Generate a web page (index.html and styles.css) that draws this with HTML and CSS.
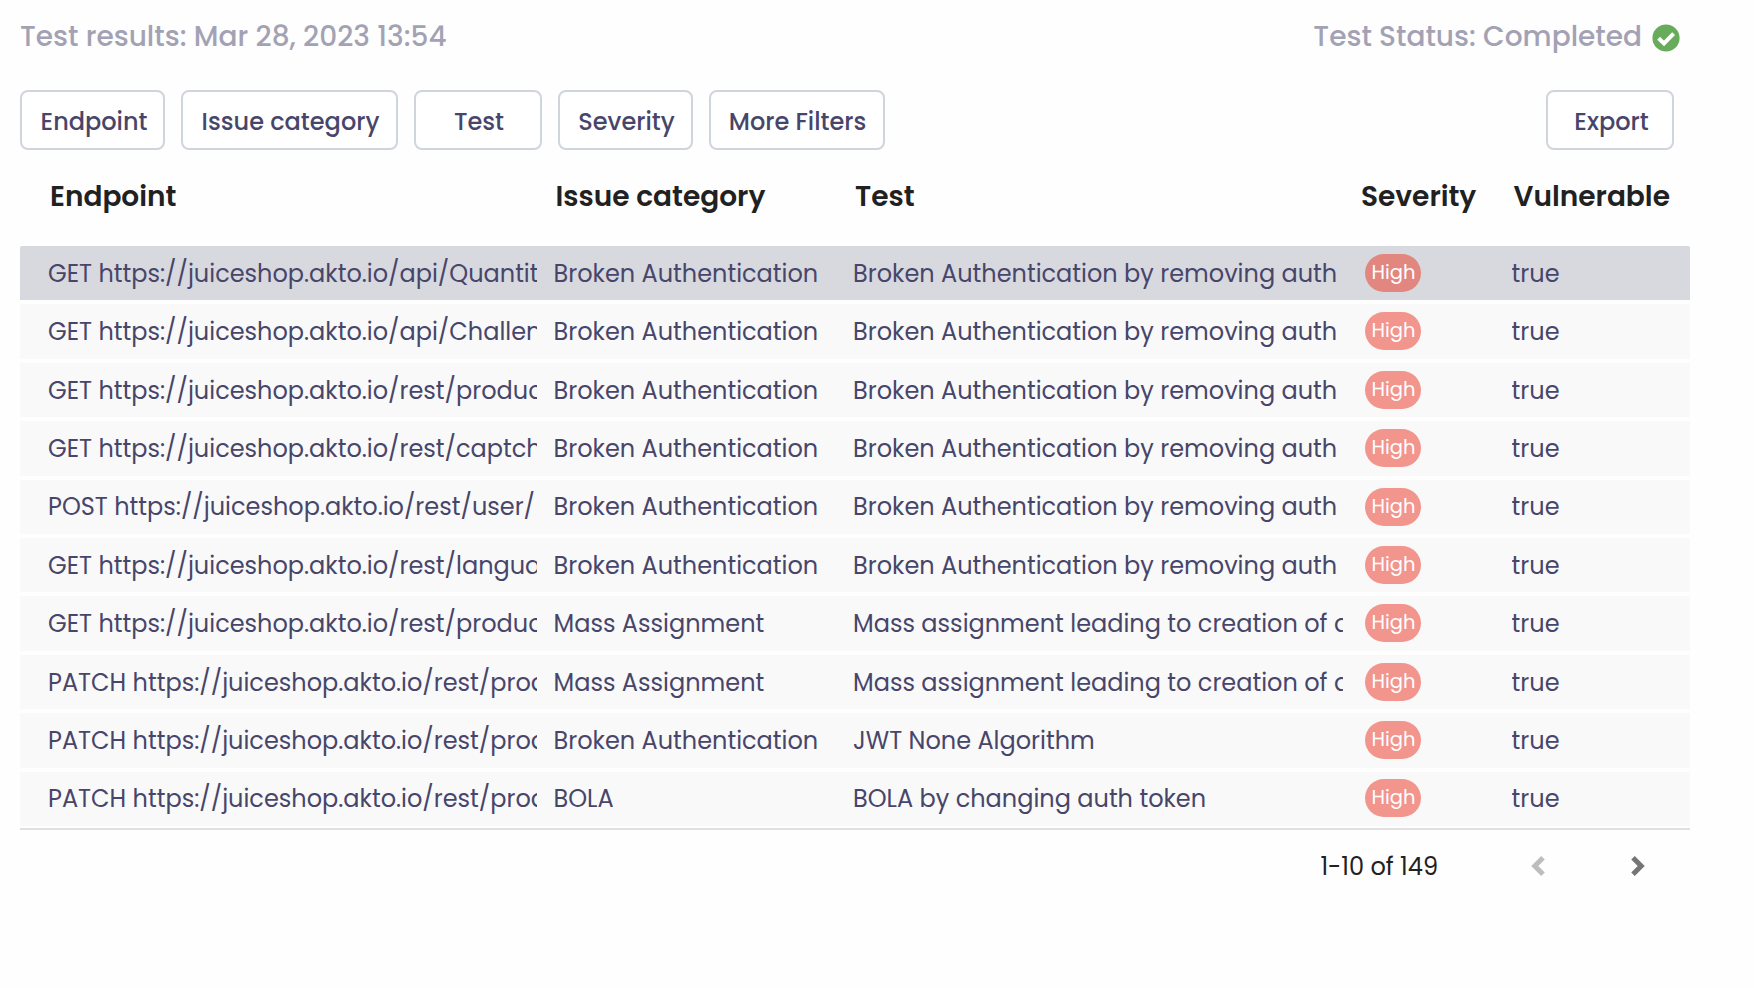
FILE: index.html
```
<!DOCTYPE html>
<html lang="en">
<head>
<meta charset="utf-8">
<title>Test results</title>
<link rel="stylesheet" href="styles.css">
</head>
<body>
<main class="page">
  <header class="summary">
    <span class="summary-results">Test results: Mar 28, 2023 13:54</span>
    <span class="summary-status">Test Status: Completed</span>
    <svg class="status-icon" viewBox="0 0 28 28"><circle cx="14" cy="14" r="13.6" fill="#68ac5b"/><path d="M6.600 14.300 12 19.400 21.600 9.600" fill="none" stroke="#fff" stroke-width="4"/></svg>
  </header>

  <nav class="toolbar">
    <button class="btn btn-endpoint">Endpoint</button>
    <button class="btn btn-category">Issue category</button>
    <button class="btn btn-test">Test</button>
    <button class="btn btn-severity">Severity</button>
    <button class="btn btn-more">More Filters</button>
    <button class="btn btn-export">Export</button>
  </nav>

  <section class="table">
    <div class="head grid">
      <span>Endpoint</span><span>Issue category</span><span>Test</span><span class="head-severity">Severity</span><span>Vulnerable</span>
    </div>
    <div class="rows">
      <div class="row grid active"><span class="cell">GET https://juiceshop.akto.io/api/Quantit</span><span class="cell">Broken Authentication</span><span class="cell">Broken Authentication by removing auth</span><span class="pill">High</span><span class="cell">true</span></div>
      <div class="row grid"><span class="cell">GET https://juiceshop.akto.io/api/Challen</span><span class="cell">Broken Authentication</span><span class="cell">Broken Authentication by removing auth</span><span class="pill">High</span><span class="cell">true</span></div>
      <div class="row grid"><span class="cell">GET https://juiceshop.akto.io/rest/produc</span><span class="cell">Broken Authentication</span><span class="cell">Broken Authentication by removing auth</span><span class="pill">High</span><span class="cell">true</span></div>
      <div class="row grid"><span class="cell">GET https://juiceshop.akto.io/rest/captch</span><span class="cell">Broken Authentication</span><span class="cell">Broken Authentication by removing auth</span><span class="pill">High</span><span class="cell">true</span></div>
      <div class="row grid"><span class="cell">POST https://juiceshop.akto.io/rest/user/</span><span class="cell">Broken Authentication</span><span class="cell">Broken Authentication by removing auth</span><span class="pill">High</span><span class="cell">true</span></div>
      <div class="row grid"><span class="cell">GET https://juiceshop.akto.io/rest/langua</span><span class="cell">Broken Authentication</span><span class="cell">Broken Authentication by removing auth</span><span class="pill">High</span><span class="cell">true</span></div>
      <div class="row grid"><span class="cell">GET https://juiceshop.akto.io/rest/produc</span><span class="cell">Mass Assignment</span><span class="cell">Mass assignment leading to creation of a</span><span class="pill">High</span><span class="cell">true</span></div>
      <div class="row grid"><span class="cell">PATCH https://juiceshop.akto.io/rest/prod</span><span class="cell">Mass Assignment</span><span class="cell">Mass assignment leading to creation of a</span><span class="pill">High</span><span class="cell">true</span></div>
      <div class="row grid"><span class="cell">PATCH https://juiceshop.akto.io/rest/prod</span><span class="cell">Broken Authentication</span><span class="cell">JWT None Algorithm</span><span class="pill">High</span><span class="cell">true</span></div>
      <div class="row grid"><span class="cell">PATCH https://juiceshop.akto.io/rest/prod</span><span class="cell">BOLA</span><span class="cell">BOLA by changing auth token</span><span class="pill">High</span><span class="cell">true</span></div>
    </div>
  </section>

  <footer class="pager">
    <span class="pager-range">1-10 of 149</span>
    <svg class="chevron" viewBox="0 0 14 20"><path d="M12 1.800 3.800 10l8.200 8.200" fill="none" stroke="#bdbdbd" stroke-width="5"/></svg>
    <svg class="chevron chevron-next" viewBox="0 0 14 20"><path d="M2 1.800 10.200 10 2 18.200" fill="none" stroke="#757575" stroke-width="5"/></svg>
  </footer>
</main>
</body>
</html>
```
FILE: styles.css
```
* { box-sizing: border-box; }

body {
  margin: 0;
  background: #fefefe;
  color: #47466a;
  font-family: Poppins, Inter, "Open Sans", sans-serif;
}

.page {
  width: 1690px;
  padding-left: 20px;
}

.summary {
  display: flex;
  align-items: center;
  height: 90px;
  padding: 0 10px 16px 0;
  color: #a3a2b4;
  font-size: 28px;
  font-weight: 500;
  line-height: 40px;
}
.summary-status { margin-left: auto; }
.status-icon { width: 28px; height: 28px; margin: 1px 0 0 10px; }

.toolbar {
  display: flex;
  gap: 16px;
  height: 60px;
  padding-right: 16px;
}
.btn {
  height: 60px;
  padding: 2px 0 0;
  border: 2px solid #d0d5dd;
  border-radius: 8px;
  background: #fff;
  color: #47466a;
  font: inherit;
  font-size: 24px;
  font-weight: 500;
}
.btn-endpoint { width: 145px; padding-left: 3px; }
.btn-category { width: 217px; padding-left: 2px; }
.btn-test { width: 128px; padding-left: 2px; }
.btn-severity { width: 135px; padding-left: 2px; }
.btn-more { width: 176px; padding-left: 1px; }
.btn-export { width: 128px; margin-left: auto; padding-left: 3px; }

.grid {
  display: grid;
  grid-template-columns: 505.5px 299.5px 507px 151.6px 1fr;
  padding-left: 28px;
  align-items: center;
}
.head {
  height: 96px;
  padding: 0 0 2px 30px;
  color: #212121;
  font-size: 28px;
  font-weight: 600;
  line-height: 40px;
}
.head-severity { margin-left: -1px; }

.rows {
  display: flex;
  flex-direction: column;
  gap: 4px;
  padding-bottom: 2px;
  border-bottom: 2px solid #e0e0e0;
}
.row {
  height: 54.4px;
  background: #f9f9f9;
  font-size: 24px;
  line-height: 52px;
}
.row:first-child { border-radius: 2px 2px 0 0; }
.row:last-child { height: 54px; }
.active { background: #d8d8df; }
.cell {
  margin-right: 17px;
  padding-top: 1.4px;
  overflow: hidden;
  white-space: nowrap;
}

.pill {
  display: flex;
  align-items: center;
  justify-content: center;
  width: 56px;
  height: 38px;
  margin: -0.4px 0 0 5px;
  padding-left: 1px;
  border-radius: 19px;
  background: #f1958d;
  color: #fff;
  font-size: 19.5px;
  line-height: 36px;
}
.active .pill { background: #e18780; }

.pager {
  display: flex;
  align-items: center;
  justify-content: flex-end;
  height: 72px;
  padding-right: 45px;
  color: #212121;
  font-size: 24px;
}
.pager-range { margin-right: 93px; padding-top: 2px; }
.chevron { width: 14px; height: 20px; }
.chevron-next { margin-left: 86px; }
```
